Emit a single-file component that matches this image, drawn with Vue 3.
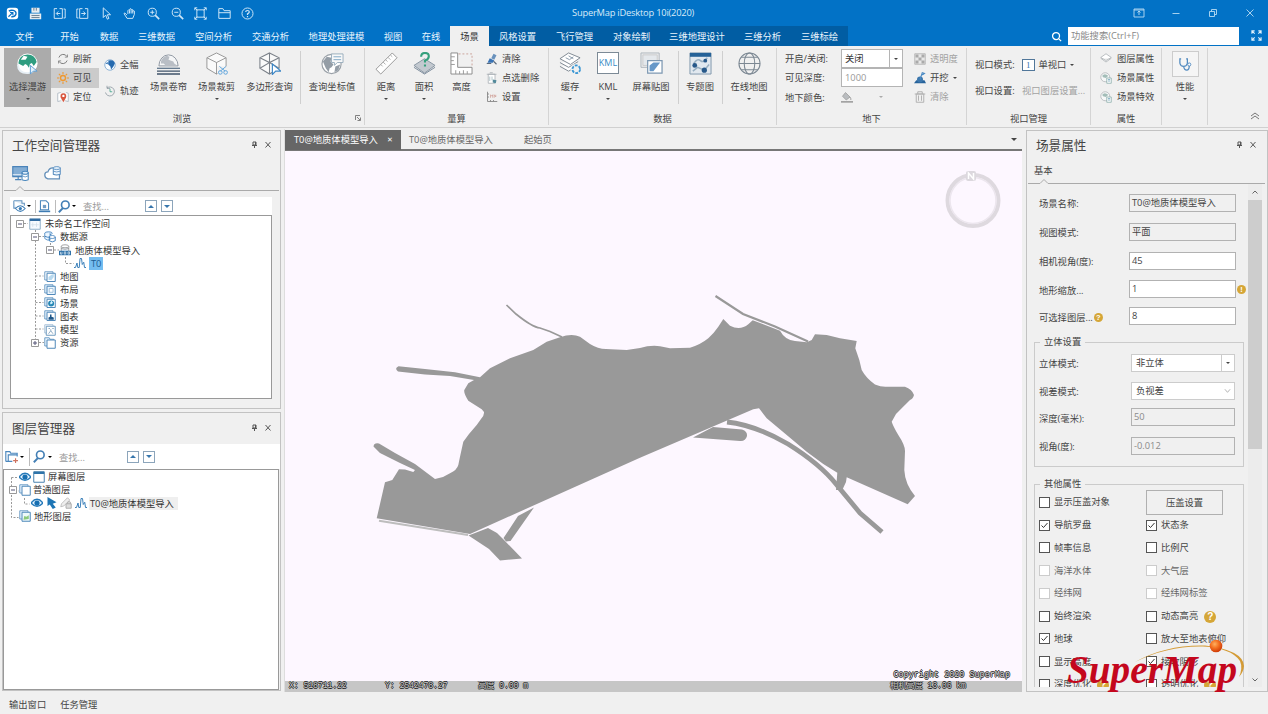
<script setup>
const icons = {
  app: '<rect x="1" y="1" width="14" height="14" rx="3.5" fill="#fff" stroke="none"/><path d="M3.500 5Q6 3.500 9 4.200Q13 5.500 12.200 9Q11 12.500 6.500 12" fill="none" stroke="#0870c4" stroke-width="1.700"/><path d="M3 12L8.500 6.500M5 6.800h3.500V10" fill="none" stroke="#0870c4" stroke-width="1.400"/>',
  save: '<path d="M3 1h10v6H3zM1 8h14v7H1z" fill="#e8edf1" stroke="none"/><path d="M6 1v3.500M9 1v3.500M3 10.500h10M3 13h10" stroke="#6a7f91" stroke-width="1.200"/>',
  back: '<path d="M5 2H1.500v12h10V2H8"/><path d="M13 2.500h2v11h-2M9 8H4.500M6.500 5.500L4 8l2.500 2.500"/>',
  fwd: '<path d="M8 2H4.500v12h10V2H11"/><path d="M3 2.500H1v11h2M6.500 8h5M9 5.500L11.500 8 9 10.500"/>',
  cursor: '<path d="M4 1v12l3-3 2 5 2-1-2-4.500h4z"/>',
  hand: '<path d="M5 10L2.500 7.500Q1 7 1.500 8.500L5 14h7l2-5V5q-1.500-1.200-2 .5V3.500q-1.300-1.200-2 .5V2.500q-1.400-1.200-2 .5v1q-1.400-1-2 .5v4"/><path d="M8 4v4M10 4v4M12 5v3"/>',
  zin: '<circle cx="6.500" cy="6.500" r="5"/><path d="M10 10l5 5" stroke-width="2"/><path d="M4 6.500h5M6.500 4v5"/>',
  zout: '<circle cx="6.500" cy="6.500" r="5"/><path d="M10 10l5 5" stroke-width="2"/><path d="M4 6.500h5"/>',
  extent: '<path d="M3.500 3.500h9v9h-9zM1 1l3 3M15 1l-3 3M1 15l3-3M15 15l-3-3M1 4V1h3M12 1h3v3M1 12v3h3M12 15h3v-3"/>',
  folder: '<path d="M1 14V2h5l1.500 2.500H15V14zM1 7h14"/>',
  help: '<circle cx="8" cy="8" r="6.800"/><path d="M5.800 6.300q0-2 2.200-2t2.200 2q0 1.200-2.200 2.200v1.300M8 11v1.500" stroke-width="1.500"/>',
  earthHand: '<circle cx="12" cy="12" r="10.500" fill="#fff"/><path d="M2.500 12Q3 3 12 2.500q8 0 9.500 8l-3 4-2-3-2 1-1 4-2-3-2-1-2 2-2-1z" fill="#2f9d80"/><path d="M5 8l3-4 4 1-2 3z" fill="#fff"/><path d="M2 13q0 9 10 9 4 0 6-2" fill="none" stroke="#e7eff5" stroke-width="2"/><path d="M15 14v9l3-3h4z" fill="#e4f1fb" stroke="#5b9bd0"/>',
  refresh: '<path d="M2.500 6A6 6 0 0 1 13.500 5M13.500 10A6 6 0 0 1 2.500 11" fill="none" stroke="#7b7b7b" stroke-width="1.300"/><path d="M14 2v3.500h-3.500M2 14v-3.500h3.500" fill="none" stroke="#7b7b7b"/>',
  sun: '<circle cx="8" cy="8" r="3.300" fill="none" stroke="#ef982f" stroke-width="1.800"/><path d="M8 0v3M8 13v3M0 8h3M13 8h3M2.500 2.500l2 2M11.500 11.500l2 2M2.500 13.500l2-2M11.500 4.500l2-2" stroke="#ef982f" stroke-width="1.400"/>',
  pin: '<path d="M5 2L1 3v11l4-1M12 2l3 1v11l-4-1" fill="#fff" stroke="#a2adba"/><path d="M8.500 15L5 8.500a3.900 3.900 0 1 1 7 0z" fill="#d9573f"/><circle cx="8.500" cy="6.500" r="1.600" fill="#fff"/>',
  globe: '<circle cx="8" cy="8" r="7" fill="#f9fcff" stroke="#6d9dcb"/><path d="M6 2q7-2 8.500 4l-2 4-3 4-1-4-3-3zM2 6l3-2v3z" fill="#266aaf"/>',
  clock: '<path d="M4 4a6 6 0 1 1-2 6M4 1v3.500h4" fill="none" stroke="#83909a"/><path d="M8 5v4h3" fill="none" stroke="#2f9d80"/>',
  roller: '<path d="M2 14.500a10 11.500 0 1 1 20 0z" fill="#f5f6f7" stroke="#8e97a1"/><path d="M4 12Q4 6 10 4l3 1-1 3 5 2 1 2 3 2H9l-2-2z" fill="#b9bec5"/><path d="M0 17h24" stroke="#5a7087" stroke-width="1.300"/><path d="M0 20h24M0 23h24" stroke="#3f5369" stroke-width="1.400"/>',
  cubeCut: '<g fill="#fafafa" stroke="#8a8a8a" stroke-width=".9"><path d="M12 1L22 6v11l-10 6-10-6V6z"/><path d="M2 6l10 5 10-5M12 11v12"/></g><path d="M13 15h11v9H13z" fill="#f0f0f0"/><path d="M15 15l6 5M22 15l-6 5" stroke="#5ea4dc"/><circle cx="16" cy="21.300" r="1.900" fill="none" stroke="#5ea4dc"/><circle cx="21.500" cy="21.300" r="1.900" fill="none" stroke="#5ea4dc"/>',
  cubePick: '<g fill="#fafafa" stroke="#7b8189" stroke-width="1.100"><path d="M12 1l10 5v11l-10 6-10-6V6z"/><path d="M2 6l10 5 10-5M12 11v12M12 1v10M2 17l10-6 10 6"/></g><path d="M15 12.500v11l3.500-3.500H24z" fill="#fff" stroke="#3c86c6" stroke-width="1.200"/>',
  globeMsg: '<circle cx="11" cy="12.500" r="10" fill="#fff" stroke="#9aa1a8" stroke-width="1.200"/><path d="M2 10l4-5 5 1-1 4 3 3-2 3-2 1-1 4-3-4zM15 15l5-2-2 6-4 2z" fill="#949da6"/><path d="M11 2h12v9h-6l-3 3v-3h-3z" fill="#f9f9f9" stroke="#99adbc"/><path d="M13 5h8M13 8h8" stroke="#7fa8c6"/>',
  ruler: '<path d="M18 1l5 5L6 23l-5-5z" fill="#fff" stroke="#979797"/><path d="M16 3l2 2M13.500 5.500L16 8M11 8l2 2M8.500 10.500L11 13M6 13l2 2" stroke="#aaa"/>',
  area: '<path d="M1 14l11-7 11 7-11 8z" fill="#c3c9d0" stroke="#8794a1"/><path d="M1 16l11 7 11-7" fill="none" stroke="#79899a"/><path d="M8.500 5q0-4 4-4 4 0 4 3.500 0 3-4 4.500v2M12.500 13v2" fill="none" stroke="#36a17d" stroke-width="2.200"/>',
  height: '<path d="M1 1h7v15h15v7H1z" fill="#fff" stroke="#8b8b8b"/><path d="M1 5h4M1 9h3M1 13h4M6 23v-4M10 23v-3M14 23v-4M18 23v-3" stroke="#999"/><path d="M9 2h14v14" fill="none" stroke="#caa199" stroke-dasharray="2 2"/>',
  clearBlue: '<path d="M10 1l4 2-3 6-4-2z" fill="#6991bc"/><path d="M5 7l6 3-2 3H2z" fill="#3772b5"/><path d="M1 14h6M10 11l4 4" stroke="#5c6b7d" stroke-width="1.500"/>',
  delPick: '<path d="M3 3h9v12H3zM1 3h13M5 1h4" fill="#fff" stroke="#a3a9af"/><path d="M5 6v6M8 6v5" stroke="#9db4bb"/><path d="M9 10l5 1-1 4-4-1z" fill="#548a9b"/>',
  measureSet: '<path d="M2 1v13h13M2 4h2M2 8h2M6 14v-2M10 14v-2" fill="none" stroke="#888" stroke-width="1.200"/><path d="M6 9V5l2 2 1-2v4M11 9V5l2 3V5" fill="none" stroke="#d0a299"/>',
  cache: '<g fill="#fff" stroke="#7c8690"><path d="M1 15l9 5 10-6"/><path d="M1 11l9 5 10-6"/><path d="M1 7l9-6 12 5-10 7z"/></g><path d="M7 6l4 2 4-3M10 4l5 3" fill="none" stroke="#8999a8"/><circle cx="18" cy="18" r="6" fill="#f0f0f0"/><circle cx="18" cy="18" r="4" fill="none" stroke="#3b97d4" stroke-width="1.900" stroke-dasharray="3 1.200"/>',
  screen: '<path d="M1 1h19v15H1z" fill="#eaebed" stroke="#b0b6bc"/><path d="M3 3h15v11H3z" fill="#e4e8ec" stroke="#ccc"/><path d="M8 9h15v13H8z" fill="#fff" stroke="#7d98b2" stroke-width="1.300"/><path d="M10 20v-6l4-3h7l-7 9z" fill="#6798c8"/>',
  theme: '<path d="M1 1h22v22H1z" fill="#e1e8ef" stroke="#8098ab"/><path d="M1 1h22v4H1z" fill="#266298"/><path d="M5 12q4-6 7-3t7-3M4 20l5-4 7 3 5-6" fill="none" stroke="#98afc1" stroke-width="1.500"/><circle cx="6" cy="14" r="2.500" fill="#28598a"/><circle cx="17" cy="9" r="2" fill="#28598a"/><circle cx="16" cy="19" r="2.700" fill="#28598a"/>',
  online: '<g fill="none" stroke="#7c8893" stroke-width="1.100"><circle cx="12" cy="12" r="11"/><ellipse cx="12" cy="12" rx="5.500" ry="11"/><path d="M1 12h22M3.500 5.500h17M3.500 18.500h17"/></g>',
  trans: '<path d="M1 1h14v14H1z" fill="#e8e8e8" stroke="#aaa"/><path d="M2 2h4v4H2zM10 2h4v4h-4zM6 6h4v4H6zM2 10h4v4H2zM10 10h4v4h-4z" fill="#aaa"/>',
  dig: '<path d="M0 15h16l-2-4H3z" fill="#27639b"/><circle cx="8" cy="10" r="4" fill="#3c77ad"/><path d="M8 10l3-9 3 1-3 2" fill="none" stroke="#4989c3" stroke-width="1.400"/>',
  trash: '<path d="M3 4h10v11H3zM1 4h14M5 4V1h6v3M6 6v7M10 6v7" fill="none" stroke="#b1b1b1" stroke-width="1.300"/>',
  bucket: '<path d="M6 2l6 6-5 4-5-5z" fill="#b9bcbf" stroke="#999"/><path d="M12 8q2 3 1 4" fill="none" stroke="#888"/><path d="M0 14.500h16" stroke="#999" stroke-width="2"/>',
  layer: '<path d="M1 6l7-5 7 5-7 4zM1 7l7 5 7-5" fill="#fff" stroke="#a6abaf"/>',
  sceneAttr: '<circle cx="7" cy="7" r="6" fill="#f6f8f8" stroke="#adb2b6"/><path d="M3 5q3-4 8 0L8 8 4 7z" fill="#a3bdb8"/><path d="M9 8h6v7H9z" fill="#fff" stroke="#84a9a6"/><path d="M10.500 10h3M10.500 12h3" stroke="#6aa0b7"/>',
  steth: '<path d="M5 3H3v7q1 5 6 5t6-5V3h-2M9 15q1 6 5 6t4-7" fill="none" stroke="#528bc0" stroke-width="2"/><circle cx="18" cy="12" r="2.500" fill="#fff" stroke="#528bc0" stroke-width="1.500"/>',
  monitorDb: '<path d="M1 2h19v13H1z" fill="#83add4" stroke="#4a83b9" stroke-width="1.500"/><path d="M1 12.500h12" stroke="#fff"/><path d="M8 15v4M4 19h8" stroke="#4a83b9" stroke-width="1.500"/><path d="M13 10v9q4 2 8 0v-9z" fill="#fff" stroke="#4785bb" stroke-width="1.300"/><ellipse cx="17" cy="10" rx="4" ry="2" fill="#dcebf8" stroke="#4785bb" stroke-width="1.300"/><path d="M13 14q4 3 8 0" fill="none" stroke="#4785bb"/>',
  cloudDb: '<path d="M20 12v6H5q-4-1-4-5t4-4q2-6 8-5" fill="#fff" stroke="#638fb9" stroke-width="1.600"/><path d="M12 4v8q4 2 9 0V4z" fill="#eef6fd" stroke="#5289bd" stroke-width="1.300"/><ellipse cx="16.500" cy="4" rx="4.500" ry="2" fill="#dcebf8" stroke="#5289bd"/><path d="M12 8q4 2 9 0" fill="none" stroke="#5289bd"/>',
  docEye: '<path d="M1 1h10v3h3v3M1 1v9h3" fill="#e5eff8" stroke="#6796c0" stroke-width="1.300"/><path d="M3 10.500q6-7 12 0-6 7-12 0z" fill="#fff" stroke="#3c7db6" stroke-width="1.300"/><circle cx="9" cy="10.500" r="2" fill="#387bb6"/>',
  docSave: '<path d="M3 1h7l3 3v8H3z" fill="#fff" stroke="#4b87bd" stroke-width="1.300"/><path d="M1 13h14v2H1z" fill="#3f7cb3"/><path d="M6 6h4v4H6z" fill="#719bc2"/>',
  search: '<circle cx="9" cy="6" r="4.700" fill="#fff" stroke="#437fb5" stroke-width="2"/><path d="M6 10l-5 5" stroke="#437fb5" stroke-width="2.500"/>',
  win: '<path d="M1 1h14v14H1z" fill="#f5faff" stroke="#88a9c5" stroke-width="1.200"/><path d="M1 1h14v3H1z" fill="#2f6ba2"/><path d="M5 6v6M10 6v6M3 9h10" stroke="#d0dfe9"/>',
  db2: '<ellipse cx="6" cy="3" rx="5" ry="2" fill="#d7e9f9" stroke="#387bb9"/><path d="M1 3v7q3 3 7 2V3" fill="#eef7ff" stroke="#387bb9"/><ellipse cx="11" cy="8" rx="4" ry="2" fill="#fff" stroke="#387bb9"/><path d="M7 8v5q4 3 8 0V8M1 7q4 2 7 1" fill="none" stroke="#387bb9" stroke-width="1.200"/>',
  udb: '<path d="M3 3v7h10V3" fill="#eef6fd" stroke="#888"/><ellipse cx="8" cy="3" rx="5" ry="2" fill="#fff" stroke="#888"/><path d="M3 6q5 2 10 0" fill="none" stroke="#888"/><path d="M0 9h16v6H0z" fill="#2f72a9"/><path d="M2 10.500v3h2v-3M7 10.500v3h2v-3zM12 10.500v3h2v-3z" fill="none" stroke="#fff" stroke-width=".8"/>',
  wave: '<path d="M0 14h2l2-6 1 6h2l1-12 2 0 1 8 2-3 1 7h2" fill="none" stroke="#367db8" stroke-width="1.300"/>',
  mapi: '<path d="M1 1h11v11H1z" fill="#f8fcff" stroke="#4c86b8"/><path d="M4 3h11v11H4z" fill="#fff" stroke="#4c86b8" stroke-width="1.300"/><path d="M6 12V8l4-3 3-1v4l-3 4z" fill="#b7d9ef"/>',
  layout: '<path d="M1 1h11v11H1z" fill="#e6f2fc" stroke="#4c86b8"/><path d="M4 3h11v11H4z" fill="#eaf6ff" stroke="#4c86b8" stroke-width="1.300"/><path d="M7 6h5v5H7z" fill="#fff" stroke="#8fb2cf"/>',
  scene: '<path d="M1 1h11v11H1z" fill="#e6f2fc" stroke="#4c86b8"/><path d="M4 3h11v11H4z" fill="#fff" stroke="#4c86b8" stroke-width="1.300"/><circle cx="9.500" cy="8.500" r="4" fill="#2587b5"/><path d="M10 5l2 3-3 2-1-2z" fill="#d9f4ff"/>',
  chart: '<path d="M1 1h11v11H1z" fill="#e6f2fc" stroke="#4c86b8"/><path d="M4 3h11v11H4z" fill="#fff" stroke="#4c86b8" stroke-width="1.300"/><path d="M6 13v-3l2-1V6h2v3l3 1v3z" fill="#1d5689"/>',
  model: '<path d="M1 1h11v11H1z" fill="#fff" stroke="#8fb2cf"/><path d="M3 3h12v12H3z" fill="#fff" stroke="#6b98bd" stroke-width="1.300"/><path d="M6 6h2M11 6h2M6 13l3-4 3 4M9 9V7" fill="none" stroke="#6c91b1"/>',
  resource: '<path d="M1 1h6l1 2h5v9H1z" fill="#e6f2fc" stroke="#4c86b8"/><path d="M4 4h11v11H4z" fill="#fff" stroke="#4c86b8" stroke-width="1.300"/>',
  folderPlus: '<path d="M1 14V2h5l1 2h8v4M1 14h8M4 14V6h11" fill="none" stroke="#4b87bd" stroke-width="1.400"/><path d="M13 10v6M10 13h6" stroke="#ce7360" stroke-width="1.400"/>',
  eye: '<path d="M0 8q8-10 16 0-8 9-16 0z" fill="#e7f4ff" stroke="#2579b9" stroke-width="1.800"/><circle cx="8" cy="8" r="3.500" fill="#176fb1"/>',
  frame: '<path d="M1 1h14v14H1z" fill="#fff" stroke="#457fae" stroke-width="1.300"/><path d="M1 1h14v3H1z" fill="#2e74aa"/>',
  stack: '<path d="M1 1h11v11H1z" fill="#eaf6ff" stroke="#4c86b8"/><path d="M4 3h11v12H4z" fill="#fff" stroke="#4c86b8" stroke-width="1.300"/>',
  select: '<path d="M2 0v12l3-2 4 6 4-2-4-5 5-2z" fill="#1d75b5"/>',
  pencil: '<path d="M1 13l1-4L10 1l3 3-8 8z" fill="#eee" stroke="#b2b2b2"/><path d="M8 9h7v6H8zM10 9V7q2-2 4 0v2" fill="#ddd" stroke="#aaa" stroke-width="1.200"/>',
  terrain: '<path d="M1 1h11v11H1z" fill="#eaf6ff" stroke="#4c86b8"/><path d="M4 3h11v12H4z" fill="#edf9fa" stroke="#4c86b8" stroke-width="1.300"/><path d="M6 13l1-5 3 1 3-2v5z" fill="#8bc97a"/>'
}

const quick = ['app', 'save', 'back', 'fwd', 'cursor', 'hand', 'zin', 'zout', 'extent', 'folder', 'help']

const tabs = [
  { t: '文件', w: 49 }, { t: '开始', w: 41 }, { t: '数据', w: 38 }, { t: '三维数据', w: 57 },
  { t: '空间分析', w: 57 }, { t: '交通分析', w: 57 }, { t: '地理处理建模', w: 75 }, { t: '视图', w: 38 },
  { t: '在线', w: 38 }, { t: '场景', w: 39, k: 'on' }, { t: '风格设置', w: 57, k: 'ctx' }, { t: '飞行管理', w: 57, k: 'ctx' },
  { t: '对象绘制', w: 57, k: 'ctx' }, { t: '三维地理设计', w: 74, k: 'ctx' }, { t: '三维分析', w: 57, k: 'ctx' }, { t: '三维标绘', w: 57, k: 'ctx' }
]

const groups = [
  {
    t: '浏览', w: 365, pad: 4, corner: true,
    cols: [
      { big: 1, w: 47, i: 'earthHand', t: '选择漫游', a: 1, on: 1 },
      { w: 48, rows: [{ i: 'refresh', t: '刷新' }, { i: 'sun', t: '可见', on: 1 }, { i: 'pin', t: '定位' }] },
      { w: 45, two: 1, rows: [{ i: 'globe', t: '全幅' }, { i: 'clock', t: '轨迹' }] },
      { big: 1, w: 49, i: 'roller', t: '场景卷帘' },
      { big: 1, w: 47, i: 'cubeCut', t: '场景裁剪', a: 1 },
      { big: 1, w: 59, i: 'cubePick', t: '多边形查询' },
      { sep: 1, w: 3 },
      { big: 1, w: 60, i: 'globeMsg', t: '查询坐标值' }
    ]
  },
  {
    t: '量算', w: 184, pad: 2,
    cols: [
      { big: 1, w: 38, i: 'ruler', t: '距离', a: 1 },
      { big: 1, w: 38, i: 'area', t: '面积', a: 1 },
      { big: 1, w: 37, i: 'height', t: '高度' },
      { w: 62, rows: [{ i: 'clearBlue', t: '清除' }, { i: 'delPick', t: '点选删除' }, { i: 'measureSet', t: '设置' }] }
    ]
  },
  {
    t: '数据', w: 228, pad: 2,
    cols: [
      { big: 1, w: 38, i: 'cache', t: '缓存', a: 1 },
      { big: 1, w: 38, kml: 1, t: 'KML', a: 1 },
      { big: 1, w: 48, i: 'screen', t: '屏幕贴图' },
      { sep: 1, w: 7 },
      { big: 1, w: 36, i: 'theme', t: '专题图' },
      { sep: 1, w: 8 },
      { big: 1, w: 46, i: 'online', t: '在线地图', a: 1 }
    ]
  }
]

const tree = [
  { d: 0, e: '-', i: 'win', t: '未命名工作空间' },
  { d: 1, e: '-', i: 'db2', t: '数据源' },
  { d: 2, e: '-', i: 'udb', t: '地质体模型导入' },
  { d: 3, i: 'wave', t: 'T0', on: 1 },
  { d: 1, i: 'mapi', t: '地图' },
  { d: 1, i: 'layout', t: '布局' },
  { d: 1, i: 'scene', t: '场景' },
  { d: 1, i: 'chart', t: '图表' },
  { d: 1, i: 'model', t: '模型' },
  { d: 1, e: '+', i: 'resource', t: '资源' }
]

const fields = [
  { l: '场景名称:', v: 'T0@地质体模型导入', h: 29, ro: 1 },
  { l: '视图模式:', v: '平面', h: 29, ro: 1 },
  { l: '相机视角(度):', v: '45', h: 29 },
  { l: '地形缩放...', v: '1', h: 28, warn: 1 },
  { l: '可选择图层...', v: '8', h: 26, q: 1 }
]

const stereo = [
  { l: '立体模式:', v: '非立体', h: 29, k: 'combo' },
  { l: '视差模式:', v: '负视差', h: 27, k: 'chev' },
  { l: '深度(毫米):', v: '50', h: 26, k: 'dis' },
  { l: '视角(度):', v: '-0.012', h: 31, k: 'dis' }
]

const checks = [
  [{ t: '显示压盖对象' }, { btn: 1, t: '压盖设置' }],
  [{ t: '导航罗盘', c: 1 }, { t: '状态条', c: 1 }],
  [{ t: '帧率信息' }, { t: '比例尺' }],
  [{ t: '海洋水体', d: 1 }, { t: '大气层', d: 1 }],
  [{ t: '经纬网', d: 1 }, { t: '经纬网标签', d: 1 }],
  [{ t: '始终渲染' }, { t: '动态高亮', q: 1 }],
  [{ t: '地球', c: 1 }, { t: '放大至地表俯仰' }],
  [{ t: '显示高度' }, { t: '接收阴影', c: 1 }],
  [{ t: '深度优化', q: 1 }, { t: '透明优化', q: 1 }]
]
</script>

<template>
  <div class="app">
    <header class="titlebar">
      <div class="quick">
        <svg v-for="q in quick" :key="q" class="q" viewBox="0 0 16 16" v-html="icons[q]"></svg>
      </div>
      <span class="title">SuperMap iDesktop 10i(2020)</span>
      <div class="winctl">
        <svg viewBox="0 0 12 12"><path d="M1 2h10v8H1zM6 8V4M4.500 5.500L6 4l1.500 1.500M1 3h10" /></svg>
        <svg viewBox="0 0 12 12"><path d="M2.500 6.500h7" /></svg>
        <svg viewBox="0 0 12 12"><path d="M2.500 4.500h5v5h-5zM4.500 4.500v-2h5v5h-2" /></svg>
        <svg viewBox="0 0 12 12"><path d="M2.500 2.500l7 7M9.500 2.500l-7 7" /></svg>
      </div>
    </header>
    <nav class="tabs">
      <div v-for="t in tabs" :key="t.t" class="tab" :class="t.k" :style="{ width: t.w + 'px' }">{{ t.t }}</div>
      <svg class="find" viewBox="0 0 12 12"><circle cx="5.500" cy="5.500" r="3.800" /><path d="M8 8l3 3" /></svg>
      <div class="findbox">功能搜索(Ctrl+F)</div>
      <svg class="full" viewBox="0 0 12 12"><path d="M1 4V1h3M1 1l3 3M8 1h3v3M11 1L8 4M1 8v3h3M1 11l3-3M11 8v3H8M11 11L8 8" /></svg>
    </nav>

    <section class="ribbon">
      <div v-for="g in groups" :key="g.t" class="group" :style="{ width: g.w + 'px' }">
        <div class="cols" :style="{ paddingLeft: g.pad + 'px' }">
          <template v-for="(c, n) in g.cols" :key="n">
            <div v-if="c.sep" class="sep" :style="{ width: c.w + 'px' }"><i></i></div>
            <div v-else-if="c.big" class="big" :class="{ on: c.on }" :style="{ width: c.w + 'px' }">
              <span v-if="c.kml" class="kml">KML</span>
              <svg v-else viewBox="0 0 24 24" v-html="icons[c.i]"></svg>
              <span class="lbl">{{ c.t }}</span>
              <i v-if="c.a" class="arr"></i>
            </div>
            <div v-else class="small" :class="{ two: c.two }" :style="{ width: c.w + 'px' }">
              <div v-for="r in c.rows" :key="r.t" class="srow" :class="{ on: r.on }">
                <svg viewBox="0 0 16 16" v-html="icons[r.i]"></svg><span>{{ r.t }}</span>
              </div>
            </div>
          </template>
        </div>
        <div class="gname">{{ g.t }}</div>
        <svg v-if="g.corner" class="corner" viewBox="0 0 6 6"><path d="M.5 5V.5H5M2 2l3 3M5.500 2.500v3h-3" /></svg>
      </div>

      <div class="group under">
        <div class="cols">
          <div class="ucol names"><span>开启/关闭:</span><span>可见深度:</span><span>地下颜色:</span></div>
          <div class="ucol vals">
            <div class="rcombo"><span>关闭</span><b><i class="arr"></i></b></div>
            <div class="rcombo off"><span>1000</span></div>
            <div class="rcolor"><svg viewBox="0 0 16 16" v-html="icons.bucket"></svg><i class="arr"></i></div>
          </div>
          <div class="ucol acts">
            <div class="srow dim"><svg viewBox="0 0 16 16" v-html="icons.trans"></svg><span>透明度</span></div>
            <div class="srow"><svg viewBox="0 0 16 16" v-html="icons.dig"></svg><span>开挖</span><i class="arr"></i></div>
            <div class="srow dim"><svg viewBox="0 0 16 16" v-html="icons.trash"></svg><span>清除</span></div>
          </div>
        </div>
        <div class="gname">地下</div>
      </div>

      <div class="group port">
        <div class="cols pcols">
          <div class="prow"><span>视口模式:</span><b class="one">1</b><span>单视口</span><i class="arr"></i></div>
          <div class="prow"><span>视口设置:</span><span class="dimtxt">视口图层设置...</span></div>
        </div>
        <div class="gname">视口管理</div>
      </div>

      <div class="group attr">
        <div class="cols">
          <div class="small">
            <div class="srow"><svg viewBox="0 0 16 16" v-html="icons.layer"></svg><span>图层属性</span></div>
            <div class="srow"><svg viewBox="0 0 16 16" v-html="icons.sceneAttr"></svg><span>场景属性</span></div>
            <div class="srow"><svg viewBox="0 0 16 16" v-html="icons.sceneAttr"></svg><span>场景特效</span></div>
          </div>
        </div>
        <div class="gname">属性</div>
      </div>

      <div class="group perf">
        <div class="cols">
          <div class="big">
            <span class="pbox"><svg viewBox="0 0 24 24" v-html="icons.steth"></svg></span>
            <span class="lbl">性能</span><i class="arr"></i>
          </div>
        </div>
      </div>
      <svg class="fold" viewBox="0 0 10 8"><path d="M1 4l4-3 4 3M1 7l4-3 4 3" /></svg>
    </section>

    <main class="work">
      <aside class="left">
        <div class="panel ws">
          <div class="phead"><span>工作空间管理器</span>
            <svg class="pc" viewBox="0 0 22 8"><path d="M3 1h3v3H3zM2 4.500h5M4.500 4v3M5.500 1v3" /><path d="M15.500 1l5 5.500M20.500 1l-5 5.500" /></svg>
          </div>
          <div class="modes">
            <svg viewBox="0 0 22 22" v-html="icons.monitorDb"></svg>
            <svg viewBox="0 0 22 22" v-html="icons.cloudDb"></svg>
          </div>
          <svg class="rule" viewBox="0 0 275 6"><path d="M0 5.500h12l4-4 4 4h255" /></svg>
          <div class="tool">
            <svg viewBox="0 0 16 16" v-html="icons.docEye"></svg><i class="arr"></i><em></em>
            <svg viewBox="0 0 16 16" v-html="icons.docSave"></svg><em></em>
            <svg viewBox="0 0 16 16" v-html="icons.search"></svg><i class="arr"></i>
            <span class="ph">查找...</span>
            <b class="nav up"></b><b class="nav"></b>
          </div>
          <div class="tree">
            <svg class="lines" viewBox="0 0 100 140"><path d="M14 7.500h4M25.500 14v112M29 20.500h5M40.500 27v7M44 34h5M55.500 41v6.500h8M25.500 60h8M25.500 73.500h8M25.500 86.500h8M25.500 100h8M25.500 113h8M29 126.500h5" /></svg>
            <div v-for="r in tree" :key="r.t" class="trow" :style="{ paddingLeft: 5 + r.d * 15 + 'px' }">
              <svg class="exp" :class="{ none: !r.e }" viewBox="0 0 8 8"><path class="bx" d="M.5.5h7v7h-7z" /><path d="M2 4h4" /><path v-if="r.e === '+'" d="M4 2v4" /></svg>
              <svg viewBox="0 0 16 16" v-html="icons[r.i]"></svg>
              <span :class="{ on: r.on }">{{ r.t }}</span>
            </div>
          </div>
        </div>

        <div class="panel lay">
          <div class="phead"><span>图层管理器</span>
            <svg class="pc" viewBox="0 0 22 8"><path d="M3 1h3v3H3zM2 4.500h5M4.500 4v3M5.500 1v3" /><path d="M15.500 1l5 5.500M20.500 1l-5 5.500" /></svg>
          </div>
          <div class="tool">
            <svg viewBox="0 0 16 16" v-html="icons.folderPlus"></svg><i class="arr"></i><em></em>
            <svg viewBox="0 0 16 16" v-html="icons.search"></svg><i class="arr"></i>
            <span class="ph">查找...</span>
            <b class="nav up"></b><b class="nav"></b>
          </div>
          <div class="tree">
            <svg class="lines" viewBox="0 0 100 140"><path d="M8.500 7.500h7M8.500 7.500v40h7M12 21h4M21.500 28v6h5" /></svg>
            <div class="trow l1"><svg viewBox="0 0 16 16" v-html="icons.eye"></svg><svg viewBox="0 0 16 16" v-html="icons.frame"></svg><span>屏幕图层</span></div>
            <div class="trow l0"><svg class="exp" viewBox="0 0 8 8"><path class="bx" d="M.5.5h7v7h-7z" /><path d="M2 4h4" /></svg><svg viewBox="0 0 16 16" v-html="icons.stack"></svg><span>普通图层</span></div>
            <div class="trow l2">
              <svg viewBox="0 0 16 16" v-html="icons.eye"></svg><svg viewBox="0 0 16 16" v-html="icons.select"></svg>
              <svg viewBox="0 0 16 16" v-html="icons.pencil"></svg><svg viewBox="0 0 16 16" v-html="icons.wave"></svg>
              <span class="cur">T0@地质体模型导入</span>
            </div>
            <div class="trow l1"><svg viewBox="0 0 16 16" v-html="icons.terrain"></svg><span>地形图层</span></div>
          </div>
        </div>
      </aside>

      <section class="center">
        <div class="docs">
          <div class="doc on"><span>T0@地质体模型导入</span><b>✕</b></div>
          <div class="doc d2">T0@地质体模型导入</div>
          <div class="doc d3">起始页</div>
          <i class="arr"></i>
        </div>
        <div class="view">
          <svg class="map" viewBox="285 151 737 530">
            <g fill="#999">
              <path d="M376.700 518.300L385 482.300L392.300 480L399 469.300L405 469.500L413.300 472L415 470L400 463L390 458L380 453L373.500 446.500Q374 442.500 379 443.500L395 453L415 464L435 479L443 477L450 473.300Q457 470 458.300 465L460 456.700L463.300 441.700L469 434L476.700 425L481 419Q484.500 415 484 412L481.700 409.300L468.300 400.700Q463.500 393 464.300 390L468.300 383.300L474 380L450 376L425 374.500L398 371.500Q394 368.500 398.500 366.300L425 369L455 372.300L480 377.300L490 368.300L510 358.300L533.300 350L546.700 341.700L560 337.300Q571.700 333 580 336.700L590 344Q598 349 606 349L626.700 350L640 348Q650 345 660 346.200L670 348.300L690 347.700Q700 345 708.300 338.300Q714 333 718.300 326.700L723.300 319L730 325.700Q740 331 748.300 324.300L752.700 320.300L780 330.700Q785 340 795 341L806.700 342.300L811.700 340L815 334.300L826.700 335L840 338.300L856.700 341L855.300 348.300L859.300 360L861.700 370Q866 378 875 384.500Q881 387 886.700 386.700L905 386.700Q912 389 914 395Q913 399 910 400L901.700 408.300L896 414L891.700 421.700Q893 426 898.300 435Q905 445 905 451L904.300 470Q905 484 915 496L907.700 504.300L846.700 477.300L846 482L842.300 490L836 490L837.300 472.700L823.300 464L806.700 451.700L766.700 418.300L759 408.300L753.300 409.300L640 457.700L470 534Z" />
              <path d="M468.500 535.500L488 528L497 533L505 541L522 558.500L500 560.500L489 549Z" />
              <path d="M534 507.500L518 516L503.500 538L506 541.500L510.500 541L514 536Z" />
              <path d="M693 437.500L713 427L742 429.500Q747.500 431 747 436Q745.500 441.500 740 441Z" />
            </g>
            <g fill="none" stroke="#999">
              <path d="M506.500 305L516 314Q532 327 540 328L550 331.500L562 337" stroke-width="1.700" />
              <path d="M715.500 296L743 314L775 326.500L808 341.500" stroke-width="2.200" />
              <path d="M727 422Q755 425 788 444Q820 464 836 484L860 513L882 532" stroke-width="4.800" />
            </g>
            <path d="M379 520.800L468 535" stroke="#bdbdbd" stroke-width="2" />
            <circle cx="973" cy="200.500" r="25.500" fill="none" stroke="#ded9df" stroke-width="4" />
            <circle cx="973" cy="200.500" r="23" fill="none" stroke="#ece6ee" stroke-width="1.500" />
            <rect x="966" y="171" width="10" height="10" rx="2" fill="#dcd8de" />
            <path d="M968.500 179v-6l5 6v-6" fill="none" stroke="#fff" stroke-width="1.500" />
          </svg>
          <div class="copy">Copyright 2020 SuperMap</div>
        </div>
        <div class="coord">
          <span class="c1">X: 518711.22</span><span class="c2">Y: 2542478.27</span><span class="c3">高度 0.00 m</span><span class="c4">相机高度 13.06 km</span>
        </div>
      </section>

      <aside class="panel props">
        <div class="phead"><span>场景属性</span>
          <svg class="pc" viewBox="0 0 22 8"><path d="M3 1h3v3H3zM2 4.500h5M4.500 4v3M5.500 1v3" /><path d="M15.500 1l5 5.500M20.500 1l-5 5.500" /></svg>
        </div>
        <div class="ptab">基本</div>
        <svg class="rule" viewBox="0 0 237 6"><path d="M0 5.500h12l4-4 4 4h217" /></svg>
        <div class="scroll">
          <div class="form">
            <div v-for="f in fields" :key="f.l" class="frow" :style="{ height: f.h + 'px' }">
              <label>{{ f.l }}<b v-if="f.q" class="badge">?</b></label>
              <div class="inp" :class="{ ro: f.ro }">{{ f.v }}</div>
              <b v-if="f.warn" class="badge">!</b>
            </div>
            <div class="box b1">
              <div class="legend"><span>立体设置</span></div>
              <div v-for="f in stereo" :key="f.l" class="frow" :style="{ height: f.h + 'px' }">
                <label>{{ f.l }}</label>
                <div class="inp" :class="f.k">{{ f.v }}
                  <b v-if="f.k === 'combo'" class="drop"><i class="arr"></i></b>
                  <svg v-if="f.k === 'chev'" class="chv" viewBox="0 0 8 6"><path d="M1 1l3 3.500L7 1" /></svg>
                </div>
              </div>
            </div>
            <div class="box b2">
              <div class="legend"><span>其他属性</span></div>
              <div v-for="(r, n) in checks" :key="n" class="crow">
                <div v-for="c in r" :key="c.t" class="cell">
                  <div v-if="c.btn" class="btn">{{ c.t }}</div>
                  <template v-else>
                    <svg class="chk" :class="{ dis: c.d }" viewBox="0 0 11 11"><rect x=".5" y=".5" width="10" height="10" /><path v-if="c.c" d="M2.500 5.500l2 2 4-4.500" /></svg>
                    <span>{{ c.t }}</span><b v-if="c.q" class="badge lg">?</b>
                  </template>
                </div>
              </div>
            </div>
          </div>
          <div class="sbar">
            <svg viewBox="0 0 8 6"><path d="M1.500 4.500L4 2l2.500 2.500" /></svg>
            <div class="thumb"></div>
            <svg class="dn" viewBox="0 0 8 6"><path d="M1.500 1.500L4 4l2.500-2.500" /></svg>
          </div>
        </div>
      </aside>
    </main>

    <footer class="foot"><span>输出窗口</span><span>任务管理</span></footer>

    <svg class="logo" viewBox="1060 636 190 60">
      <defs>
        <radialGradient id="ball" cx=".4" cy=".35" r=".65"><stop offset="0" stop-color="#ffb060" /><stop offset=".5" stop-color="#f37020" /><stop offset="1" stop-color="#cf3c08" /></radialGradient>
      </defs>
      <path d="M1135 662Q1166 644.500 1205 645.500Q1243 650 1244 666Q1243.500 672 1239 677Q1243 668 1240 661Q1231 648 1203 646.500Q1168 645.500 1135 662Z" fill="#d49b35" />
      <text x="1067" y="683" textLength="170" lengthAdjust="spacingAndGlyphs">SuperMap</text>
      <circle cx="1216" cy="646" r="6.300" fill="url(#ball)" />
    </svg>
  </div>
</template>

<style>
body { margin: 0; overflow: hidden; background: #f0f0f0; }
</style>

<style scoped>
* { box-sizing: border-box; }
i, b, em { font-style: normal; font-weight: normal; }
svg { display: block; flex: none; }
.app { position: relative; width: 1268px; height: 714px; overflow: hidden; display: flex; flex-direction: column; background: #f0f0f0; color: #444; font: 9.3px/12px "Open Sans", "Noto Sans CJK SC", sans-serif; white-space: nowrap; }
.arr { display: block; width: 0; height: 0; border: 2px solid transparent; border-top: 2.500px solid #444; border-bottom: 0; flex: none; }

.titlebar { height: 26px; flex: none; display: flex; align-items: center; background: #0272c6; color: #d9ebf8; }
.quick { width: 572px; display: flex; gap: 10.600px; padding-left: 5.500px; }
.q { width: 13px; height: 13px; fill: none; stroke: #cfe6f8; stroke-width: 1.200; }
.title { width: 122px; font-size: 9.300px; letter-spacing: -.2px; }
.winctl { margin-left: auto; display: flex; gap: 25px; padding-right: 12px; }
.winctl svg { width: 12px; height: 12px; fill: none; stroke: #b9dbf3; stroke-width: .9; }

.tabs { height: 20px; flex: none; display: flex; background: #0272c6; color: #e9f4fc; }
.tab { height: 20px; line-height: 22px; text-align: center; flex: none; }
.tab.on { background: #f0f0f0; color: #333; }
.tab.ctx { background: #015da3; }
.find { width: 11px; height: 11px; margin: 5px 6px 0 203px; fill: none; stroke: #fff; stroke-width: 1.400; }
.findbox { width: 171px; height: 18px; margin-top: 1px; background: #fff; color: #888; line-height: 18px; padding-left: 3px; }
.full { width: 11px; height: 11px; margin: 4px 0 0 12px; fill: none; stroke: #e4f2fc; stroke-width: 1.200; }

.ribbon { position: relative; height: 82px; flex: none; display: flex; border-bottom: 1px solid #d0d0d0; background: #f0f0f0; }
.group { position: relative; flex: none; height: 77px; border-right: 1px solid #d4d4d4; margin-top: 2px; display: flex; flex-direction: column; }
.cols { height: 60px; display: flex; flex: none; }
.gname { text-align: center; line-height: 12px; margin-top: 5px; }
.corner { position: absolute; right: 3px; bottom: 4px; width: 6px; height: 6px; fill: none; stroke: #666; stroke-width: .8; }
.big { flex: none; display: flex; flex-direction: column; align-items: center; padding-top: 4px; height: 59px; }
.big svg { width: 23px; height: 23px; }
.big .lbl { margin-top: 6px; line-height: 12px; }
.big .arr { margin-top: 5px; }
.big.on { background: #ababab; }
.kml { width: 22px; height: 22px; border: 1px solid #7c8a96; background: #fff; color: #3a8cc6; font-size: 9px; line-height: 20px; text-align: center; margin-bottom: 1px; }
.sep { display: flex; justify-content: center; padding-top: 3px; flex: none; }
.sep i { width: 1px; height: 53px; background: #cfcfcf; }
.small { display: flex; flex-direction: column; flex: none; padding-top: 1px; }
.srow { height: 19.300px; display: flex; align-items: center; gap: 4px; padding-left: 6px; }
.srow svg { width: 12px; height: 12px; }
.srow.on { background: #cbcbcb; padding-left: 6px; }
.small.two .srow { height: 26px; padding-left: 5px; }
.small.two { padding-top: 4px; }
.dim, .dimtxt { color: #a2a2a2; }
.under { width: 190px; }
.ucol { display: flex; flex-direction: column; }
.names { width: 64px; padding: 1px 0 0 8px; }
.names span { height: 19.300px; line-height: 20px; }
.vals { width: 62px; padding-top: 1px; }
.rcombo { width: 62px; height: 19px; border: 1px solid #b4b4b4; background: #fff; color: #333; display: flex; justify-content: space-between; line-height: 17px; padding-left: 3px; }
.rcombo b { width: 13px; border-left: 1px solid #b4b4b4; display: flex; align-items: center; justify-content: center; }
.rcombo.off { color: #999; }
.rcolor { height: 19px; display: flex; align-items: center; gap: 26px; }
.rcolor svg { width: 12px; height: 12px; }
.rcolor .arr, .dim .arr { border-top-color: #aaa; }
.acts { padding-top: 1px; }
.acts .srow { padding-left: 11px; }
.port { width: 124px; }
.pcols { flex-direction: column; padding-left: 8px; padding-top: 4px; }
.prow { height: 26px; display: flex; align-items: center; gap: 4px; }
.prow span:first-child { width: 43px; }
.one { width: 12.500px; height: 12.500px; border: 1px solid #51779a; background: #fff; color: #3576ae; text-align: center; line-height: 11px; font-family: "Liberation Serif", serif; font-size: 9px; }
.attr { width: 71px; }
.attr .srow { padding-left: 9px; gap: 5px; }
.perf { width: 46px; }
.perf .big { width: 46px; padding-top: 3px; }
.pbox { width: 27px; height: 26px; border: 1px solid #ccc; background: #f5f5f5; display: flex; align-items: center; justify-content: center; }
.pbox svg { width: 15px; height: 15px; }
.perf .lbl { margin-top: 4px; }
.fold { position: absolute; right: 8px; bottom: 7px; width: 10px; height: 8px; fill: none; stroke: #777; stroke-width: 1; }

.work { height: 564px; flex: none; display: flex; padding-top: 1px; }
.left { width: 285px; padding: 1px 0 0 2px; display: flex; flex-direction: column; gap: 3px; flex: none; border-right: 1px solid #ddd; }
.panel { border: 1px solid #c2c2c2; background: #f0f0f0; display: flex; flex-direction: column; }
.left .panel { width: 279px; }
.phead { height: 29px; flex: none; display: flex; align-items: center; justify-content: space-between; padding: 0 8px 0 9px; font-size: 12.600px; color: #444; }
.pc { width: 22px; height: 8px; fill: none; stroke: #555; stroke-width: 1; margin-top: -2px; }
.ws { height: 279px; }
.modes { display: flex; gap: 15px; padding: 5px 0 0 9px; height: 25px; flex: none; }
.modes svg { width: 17px; height: 17px; }
.rule { width: 275px; height: 6px; fill: none; stroke: #aaa; stroke-width: 1; margin-left: 1px; }
.tool { display: flex; align-items: center; flex: none; background: #fff; }
.ws .tool { margin: 6px 8px 0 7px; height: 18px; padding-left: 3px; }
.tool svg { width: 13px; height: 13px; }
.tool .arr { margin-left: 1px; border-top-color: #000; }
.tool em { width: 1px; height: 13px; background: #bbb; margin: 0 2px 0 4px; }
.ph { color: #999; margin-left: 7px; width: 62px; padding-top: 2px; }
.nav { width: 12px; height: 12px; border: 1px solid #8ca5bb; margin-right: 4px; display: flex; align-items: center; justify-content: center; background: #fff; }
.nav::after { content: ""; border: 3px solid transparent; border-top: 3.500px solid #3877ad; border-bottom: 0; }
.nav.up::after { border-top: 0; border-bottom: 3.500px solid #3877ad; }
.tree { position: relative; background: #fff; border: 1px solid #999; padding-top: 1px; color: #333; }
.ws .tree { margin: 0 8px 0 7px; height: 184px; }
.lines { position: absolute; left: -1px; top: 0; width: 100px; height: 140px; fill: none; stroke: #999; stroke-width: 1; stroke-dasharray: 2 1.500; }
.trow { position: relative; height: 13.250px; display: flex; align-items: center; gap: 4px; line-height: 13px; }
.trow svg { width: 12px; height: 12px; }
.trow .exp { width: 8px; height: 8px; fill: none; stroke: #557; stroke-width: 1; margin-right: 1px; }
.exp .bx { fill: #fff; stroke: #999; }
.trow .none { visibility: hidden; }
.trow .on { background: #74bdf0; color: #1b5c92; padding: 0 2px; margin-left: -1px; }
.lay { height: 279px; }
.lay .phead { height: 31px; }
.lay .tool { height: 25px; padding-left: 2px; }
.lay .tool em { height: 18px; margin: 0 3px 0 5px; }
.lay .tool .arr { margin-left: 2px; }
.lay .tool .arr + .ph { margin-left: 7px; width: 68px; }
.lay .tree { flex: 1; margin: 0 1px 0 0; padding-top: 0; }
.l0 { padding-left: 5px; gap: 2px; }
.l1 { padding-left: 15px; gap: 2px; }
.l2 { padding-left: 27px; gap: 2.500px; }
.l1 span { margin-left: 1px; }
.l0 .exp { margin-right: 0; }
.cur { background: #efefef; padding: 0 4px 0 1px; }

.center { width: 737px; flex: none; display: flex; flex-direction: column; }
.docs { height: 22px; flex: none; display: flex; align-items: center; padding-top: 1px; border-bottom: 2px solid #777; color: #666; }
.doc.on { width: 116px; height: 20px; background: #666; color: #fff; display: flex; justify-content: space-between; line-height: 20px; padding: 0 8px 0 9px; }
.doc b { font-size: 7px; }
.d2 { padding-left: 8px; width: 123px; }
.d3 { flex: 1; }
.docs .arr { border-width: 3px 3px 0; margin-right: 5px; }
.view { position: relative; height: 530px; background: #fdf7ff; }
.map { width: 737px; height: 530px; }
.copy { position: absolute; right: 12px; bottom: 0; }
.copy, .coord { font: 8.400px/11px "Liberation Mono", "Noto Sans CJK SC", monospace; color: #ddd; text-shadow: .7px 0 #222, -.7px 0 #222, 0 .7px #222, 0 -.7px #222; }
.copy { letter-spacing: .04px; }
.coord { height: 11px; display: flex; background: #c6c6c6; letter-spacing: -.22px; padding-left: 4px; color: #c8c8c8; }
.coord span { flex: none; }
.c1 { width: 96px; } .c2 { width: 93px; } .c3 { width: 412px; }

.props { width: 242px; margin: 1px 0 0 4px; height: 562px; }
.ptab { height: 18px; padding: 5px 0 0 7px; }
.props .phead { padding-right: 10px; }
.props .rule { width: 237px; }
.scroll { flex: 1; min-height: 0; display: flex; }
.form { width: 221px; height: 503px; overflow: hidden; padding: 4px 0 0 7px; }
.frow { display: flex; align-items: center; gap: 0; }
.frow label { width: 90px; padding-left: 5px; padding-top: 3px; display: flex; flex: none; }
.form > .frow label { width: 95px; }
.inp { width: 107px; height: 18px; border: 1px solid #b2b2b2; background: #fff; line-height: 16px; padding-left: 2px; flex: none; position: relative; }
.inp.ro { background: #f0f0f0; }
.badge { width: 9px; height: 9px; border-radius: 50%; background: #d5a637; color: #fff; font: bold 7.500px/9px "Liberation Sans", sans-serif; text-align: center; flex: none; margin: 1px 0 0 1px; }
.badge.lg { width: 12px; height: 12px; line-height: 12px; font-size: 10px; margin-left: 2px; }
.box { width: 210px; border: 1px solid #cbcbcb; position: relative; }
.legend { height: 5px; padding-left: 5px; }
.legend span { display: inline-block; position: relative; top: -7px; background: #f0f0f0; padding: 0 4px; }
.b1 { margin-top: 13px; height: 125px; }
.b1 .frow label { width: 96px; padding-left: 4px; }
.b1 .inp { width: 104px; }
.inp.combo, .inp.chev { padding-left: 4px; }
.inp.dis { background: #f0f0f0; color: #8b8b8b; }
.drop { position: absolute; right: 0; top: 0; width: 13px; height: 16px; border-left: 1px solid #ccc; display: flex; align-items: center; justify-content: center; }
.chv { position: absolute; right: 3px; top: 5px; width: 7px; height: 6px; fill: none; stroke: #aaa; stroke-width: 1; }
.inp.chev, .inp.combo { border-color: #ccc; }
.b2 { margin-top: 17px; height: 260px; }
.b2 .legend { height: 6px; }
.crow { height: 22.750px; display: flex; padding-left: 4px; }
.cell { width: 107px; display: flex; align-items: center; gap: 4px; flex: none; }
.chk { width: 11px; height: 11px; fill: none; stroke: #333; stroke-width: 1; }
.chk rect { fill: #fff; stroke: #555; }
.chk.dis rect { stroke: #ccc; }
.chk.dis + span { color: #666; }
.btn { width: 77px; height: 25px; border: 1px solid #b0b0b0; text-align: center; line-height: 23px; margin-bottom: -1px; }
.sbar { width: 14px; background: #ececec; display: flex; flex-direction: column; align-items: center; padding-top: 5px; height: 503px; }
.sbar svg { width: 8px; height: 6px; fill: none; stroke: #666; stroke-width: 1; }
.thumb { width: 14px; height: 249px; background: #cdcdcd; margin-top: 5px; }
.sbar .dn { margin-top: auto; margin-bottom: 4px; }

.foot { flex: 1; display: flex; gap: 14px; padding: 7px 0 0 9px; }
.logo { position: absolute; left: 1060px; top: 636px; width: 190px; height: 60px; }
.logo text { font: italic bold 40px "Liberation Serif", serif; fill: #c4071d; }
</style>
